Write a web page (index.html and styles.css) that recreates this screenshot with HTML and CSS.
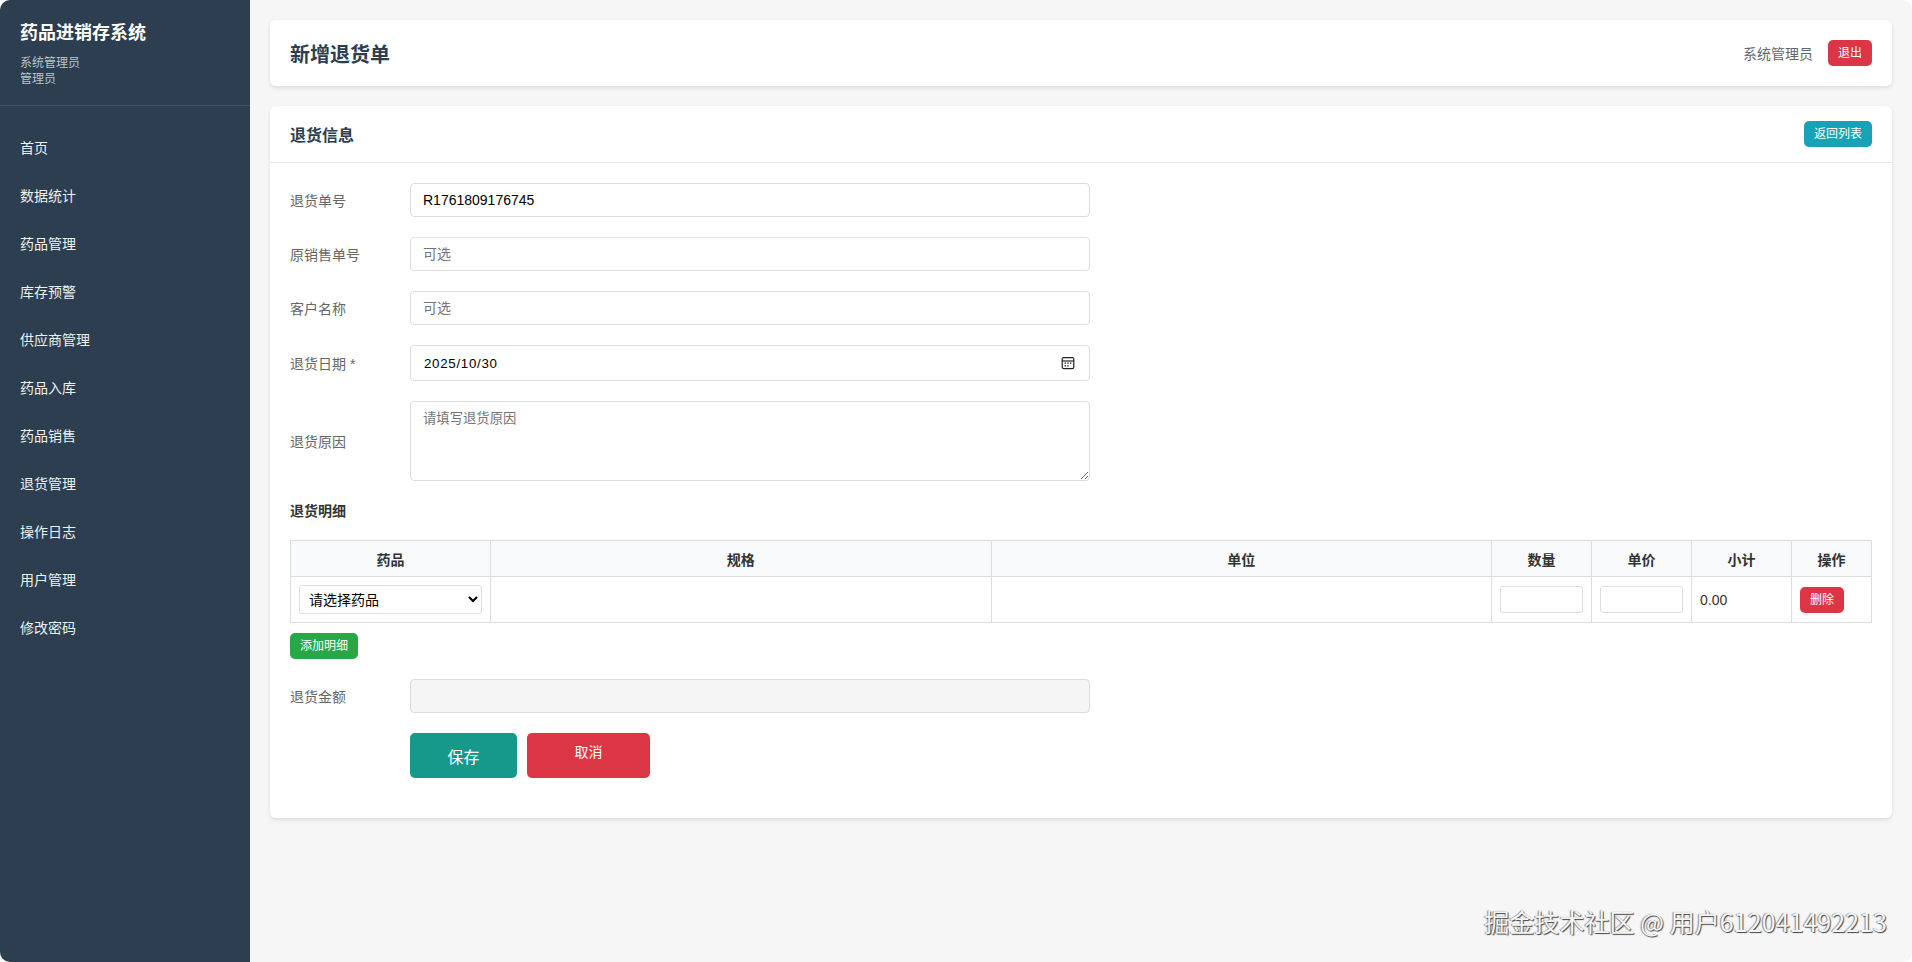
FILE: index.html
```html
<!DOCTYPE html>
<html lang="zh-CN">
<head>
<meta charset="utf-8">
<title>新增退货单</title>
<link rel="stylesheet" href="styles.css">
</head>
<body>
<div class="app">
  <aside class="sidebar">
    <div class="brand">
      <h1 class="brand-title">药品进销存系统</h1>
      <p class="brand-sub">系统管理员<br>管理员</p>
    </div>
    <nav class="nav">
      <a class="nav-item">首页</a>
      <a class="nav-item">数据统计</a>
      <a class="nav-item">药品管理</a>
      <a class="nav-item">库存预警</a>
      <a class="nav-item">供应商管理</a>
      <a class="nav-item">药品入库</a>
      <a class="nav-item">药品销售</a>
      <a class="nav-item">退货管理</a>
      <a class="nav-item">操作日志</a>
      <a class="nav-item">用户管理</a>
      <a class="nav-item">修改密码</a>
    </nav>
  </aside>
  <main class="main">
    <header class="topbar">
      <h2 class="page-title">新增退货单</h2>
      <div class="user-box">
        <span class="user-name">系统管理员</span>
        <button class="btn btn-danger">退出</button>
      </div>
    </header>
    <section class="card">
      <div class="card-head">
        <h3 class="card-title">退货信息</h3>
        <button class="btn btn-info">返回列表</button>
      </div>
      <div class="card-body">
        <div class="field">
          <label class="field-label">退货单号</label>
          <input class="control" type="text" value="R1761809176745">
        </div>
        <div class="field">
          <label class="field-label">原销售单号</label>
          <input class="control" type="text" placeholder="可选">
        </div>
        <div class="field">
          <label class="field-label">客户名称</label>
          <input class="control" type="text" placeholder="可选">
        </div>
        <div class="field">
          <label class="field-label">退货日期 *</label>
          <div class="control date-control">
            <span class="date-value">2025/10/30</span>
            <svg class="date-icon" width="14" height="14" viewBox="0 0 14 14" fill="none" stroke="#222" stroke-width="1.2">
              <rect x="1.2" y="1.6" width="11.6" height="11" rx="1.6"/>
              <path d="M1.2 5h11.6"/>
              <path d="M3.6 7.2h1.4M6.3 7.2h1.4M9 7.2h1.4M3.6 9.9h1.4M6.3 9.9h1.4" stroke-width="1.3"/>
            </svg>
          </div>
        </div>
        <div class="field">
          <label class="field-label">退货原因</label>
          <textarea class="control area" placeholder="请填写退货原因"></textarea>
        </div>
        <h4 class="detail-title">退货明细</h4>
        <table class="detail-table">
          <thead>
            <tr>
              <th class="col-drug">药品</th>
              <th>规格</th>
              <th>单位</th>
              <th class="col-num">数量</th>
              <th class="col-num">单价</th>
              <th class="col-num">小计</th>
              <th class="col-op">操作</th>
            </tr>
          </thead>
          <tbody>
            <tr>
              <td><select class="cell-select"><option>请选择药品</option></select></td>
              <td></td>
              <td></td>
              <td><input class="cell-input" type="number"></td>
              <td><input class="cell-input" type="number"></td>
              <td>0.00</td>
              <td><button class="btn btn-danger">删除</button></td>
            </tr>
          </tbody>
        </table>
        <button class="btn btn-success add-btn">添加明细</button>
        <div class="field">
          <label class="field-label">退货金额</label>
          <input class="control is-readonly" type="text" readonly>
        </div>
        <div class="actions">
          <button class="btn-large btn-save">保存</button>
          <a class="btn-large btn-cancel">取消</a>
        </div>
      </div>
    </section>
  </main>
</div>
<div class="watermark">掘金技术社区 @ 用户612041492213</div>
</body>
</html>
```
FILE: styles.css
```css
* { box-sizing: border-box; }
html, body { margin: 0; height: 100%; }
html { background: #fff; }
body {
  font-family: "Liberation Sans", "Noto Sans CJK SC", sans-serif;
  font-size: 14px;
  color: #333;
  overflow: hidden;
}
.app {
  display: flex;
  height: 962px;
  background: #f6f6f6;
  border-radius: 10px;
  overflow: hidden;
}
.sidebar { flex: 0 0 250px; background: #2c3e50; color: #fff; }
.brand { height: 106px; padding: 20px 20px 0; border-bottom: 1px solid #3e5063; }
.brand-title { margin: 0 0 10px; font-size: 18px; line-height: 26px; font-weight: 700; }
.brand-sub { margin: 0; font-size: 12px; line-height: 15.5px; color: #bdc3c7; }
.nav { padding-top: 18px; }
.nav-item { display: block; padding: 15px 20px; font-size: 14px; line-height: 18px; color: #ecf0f1; }
.main { flex: 1; min-width: 0; padding: 20px; }
.topbar {
  display: flex; align-items: center; justify-content: space-between;
  height: 66px; padding: 0 20px; margin-bottom: 20px;
  background: #fff; border-radius: 6px; box-shadow: 0 2px 4px rgba(0,0,0,.1);
}
.page-title { margin: 4px 0 0; font-size: 20px; line-height: 28px; font-weight: 700; color: #2c3e50; }
.user-box { display: flex; align-items: center; gap: 15px; }
.user-name { font-size: 14px; color: #666; }
.btn {
  display: inline-block; height: 26px; padding: 0 10px; border: 0; border-radius: 5px;
  font-family: inherit; font-size: 12px; line-height: 26px; color: #fff;
}
.btn-danger { background: #dc3545; }
.btn-info { background: #17a2b8; }
.btn-success { background: #28a745; }
.card {
  height: 712px; background: #fff; border-radius: 6px;
  box-shadow: 0 2px 4px rgba(0,0,0,.1);
}
.card-head {
  display: flex; align-items: center; justify-content: space-between;
  height: 57px; padding: 0 20px; border-bottom: 1px solid #e8e8e8;
}
.card-title { margin: 3px 0 0; font-size: 16px; line-height: 22px; font-weight: 700; color: #2c3e50; }
.card-body { padding: 20px; }
.field { display: flex; align-items: center; margin-bottom: 20px; }
.field-label { flex: 0 0 120px; font-size: 14px; color: #666; }
.control {
  width: 680px; height: 34px; padding: 0 12px;
  border: 1px solid #ddd; border-radius: 4px; background: #fff;
  font-family: inherit; font-size: 14px; color: #000; outline: 0;
}
.control::placeholder { color: #757575; }
.date-control {
  display: flex; align-items: center; justify-content: space-between;
  height: 36px; padding-right: 14px; padding-left: 13px;
}
.date-value { font-size: 13.33px; letter-spacing: .7px; }
.date-icon { display: block; }
.area { height: 80px; padding: 9px 12px; font-size: 13.33px; line-height: 16px; resize: vertical; display: block; }
.detail-title { margin: 0; height: 39px; font-size: 14px; line-height: 20px; font-weight: 700; color: #333; }
.detail-table { width: 1582px; table-layout: fixed; border-collapse: collapse; }
.detail-table th, .detail-table td { border: 1px solid #ddd; padding: 0 8px; font-size: 14px; text-align: left; }
.detail-table th { height: 36px; background: #f8f9fa; text-align: center; font-weight: 700; color: #333; }
.detail-table td { height: 46px; }
.col-drug { width: 200px; }
.col-num { width: 100px; }
.col-op { width: 80px; }
.cell-select {
  display: block; width: 183px; height: 29px; padding: 0 5px; border: 1px solid #ddd; border-radius: 3px;
  background: #fff; font-family: inherit; font-size: 14px; color: #000;
}
.cell-input { display: block; width: 83px; height: 27px; border: 1px solid #ddd; border-radius: 3px; background: #fff; }
.add-btn { display: block; margin: 10px 0 20px; }
.is-readonly { background: #f5f5f5; }
.actions { display: flex; gap: 10px; margin-left: 120px; }
.btn-large { display: block; height: 45px; border: 0; border-radius: 5px; color: #fff; font-family: inherit; }
.btn-save { width: 107px; font-size: 16px; background: #16998a; }
.btn-cancel { width: 123px; padding-top: 9px; font-size: 14px; line-height: 20px; text-align: center; background: #dc3545; }
.watermark {
  position: absolute; right: 25px; top: 905px;
  font-family: "Noto Sans CJK SC", sans-serif; font-size: 25.1px; line-height: 32px; white-space: nowrap;
  color: #f4f4f4; text-shadow: 1px 1px 1px #444, -1px 0 1px #888;
}
```
